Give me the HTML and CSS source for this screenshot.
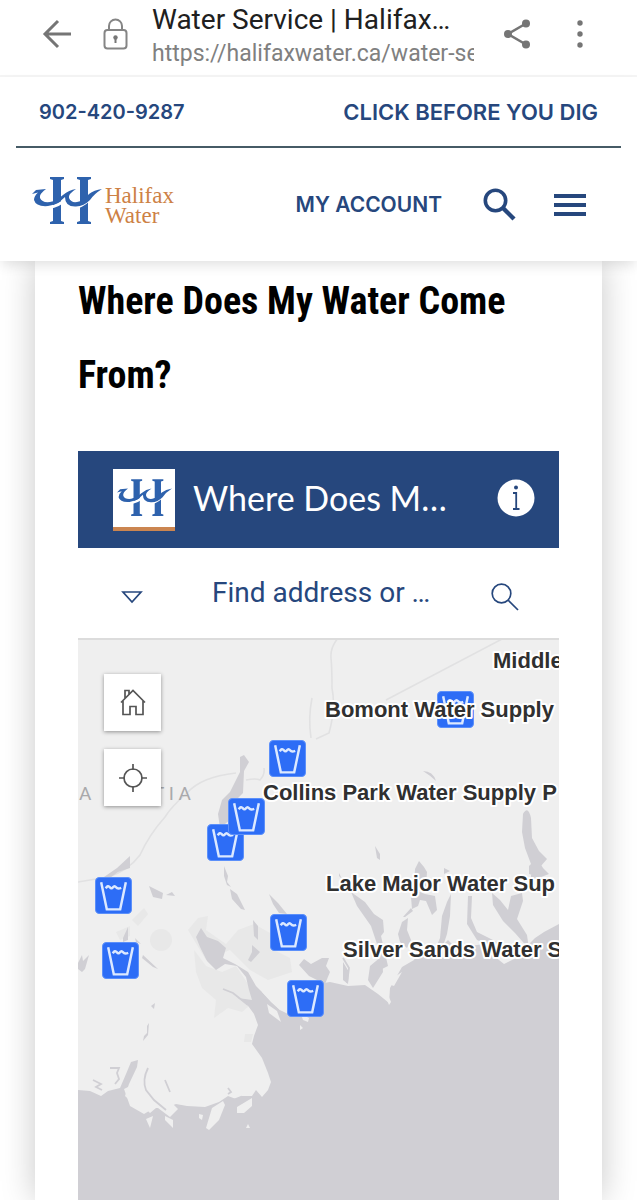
FILE: index.html
```
<!DOCTYPE html>
<html lang="en">
<head>
<meta charset="utf-8">
<meta name="viewport" content="width=device-width, initial-scale=1">
<title>Water Service | Halifax Water</title>
<link rel="stylesheet" href="styles.css">
</head>
<body>
<svg class="sprite" aria-hidden="true">
  <symbol id="mark" viewBox="0 0 70 48">
    <path fill="#2e62ad" d="M18 0h14v2l-3 1v41l3 1v2H18v-2l3-1V3l-3-1zM45 0h14v2l-3 1v41l3 1v2H45v-2l3-1V3l-3-1z"/>
    <path d="M17 30.500Q27 29 34 22M44 30.500Q54 28 61 18" fill="none" stroke="#fff" stroke-width="3"/>
    <path fill="#2e62ad" d="M0 17 4 13 14 12Q7 17 8 21 10 26 18 25 24 24 31 18 37 13 44 12 36 17 37 21 39 26 45 25 51 24 57 17 62 13 70 12 62 17 58 23 52 29 44 29.500 33 30 33 20 25 28 16 29 4 30 2 23 2 19 6 15.500z"/>
  </symbol>
  <symbol id="glass" viewBox="0 0 36 36">
    <rect x=".5" y=".5" width="35" height="35" rx="4" fill="#2d6df6" stroke="#5c90fa"/>
    <path d="M6 5 11.500 31.500h13L30 5" fill="none" stroke="#dce9ff" stroke-width="2.400"/>
    <path d="M10.500 11q2-3.500 4-1 1.500 2 3 0 1.500-2 3 0t5 .5" fill="none" stroke="#dce9ff" stroke-width="2.400"/>
  </symbol>
</svg>

<div class="browser">
  <button class="icon-button" aria-label="Back"><svg width="30" height="30" viewBox="0 0 30 30"><path d="M29 15H3M16 2 3 15l13 13" fill="none" stroke="#757575" stroke-width="3"/></svg></button>
  <svg class="lock" width="25" height="32" viewBox="0 0 25 32" role="img" aria-label="Secure"><g fill="none" stroke="#858585" stroke-width="2"><rect x="1.500" y="12" width="22" height="18.500" rx="3"/><path d="M6 12V8a6.500 6.500 0 0 1 13 0v4"/></g><circle cx="12.500" cy="19.500" r="2.200" fill="#777"/><path d="M12.500 20v5" stroke="#777" stroke-width="2"/></svg>
  <div class="address">
    <div class="page-name">Water Service | Halifax…</div>
    <div class="page-url">https://halifaxwater.ca/water-se</div>
  </div>
  <button class="icon-button share" aria-label="Share"><svg width="26" height="30" viewBox="0 0 26 30"><path d="M22 4.500 4 15l18 10.500" fill="none" stroke="#757575" stroke-width="2.600"/><g fill="#757575"><circle cx="22" cy="4.500" r="4"/><circle cx="4" cy="15" r="4"/><circle cx="22" cy="25.500" r="4"/></g></svg></button>
  <button class="icon-button" aria-label="More options"><svg width="8" height="28" viewBox="0 0 8 28" fill="#757575"><circle cx="4" cy="3" r="2.700"/><circle cx="4" cy="14" r="2.700"/><circle cx="4" cy="25" r="2.700"/></svg></button>
</div>

<header class="site-header">
  <div class="quick-links">
    <a href="tel:902-420-9287">902-420-9287</a>
    <a class="dig" href="#dig">CLICK BEFORE YOU DIG</a>
  </div>
  <div class="main-row">
    <a class="brand" href="#home">
      <svg width="70" height="48" aria-hidden="true"><use href="#mark"/></svg>
      <span class="brand-name"><span>Halifax</span><span>Water</span></span>
    </a>
    <a class="account" href="#account">MY ACCOUNT</a>
    <button class="icon-button search-toggle" aria-label="Search"><svg width="33" height="33" viewBox="0 0 33 33" fill="none" stroke="#26477d"><circle cx="12.500" cy="12.500" r="10.200" stroke-width="3.600"/><path d="m20 20 11 11" stroke-width="4.400"/></svg></button>
    <button class="icon-button" aria-label="Menu"><svg width="32" height="22" viewBox="0 0 32 22" fill="#26477d"><path d="M0 0h32v4H0zM0 9h32v4H0zM0 18h32v4H0z"/></svg></button>
  </div>
</header>

<main class="card">
  <h1>Where Does My Water Come <br>From?</h1>
  <section class="map-app">
    <div class="banner">
      <div class="app-logo"><svg width="55" height="38" aria-hidden="true"><use href="#mark"/></svg></div>
      <h2>Where Does M…</h2>
      <button class="icon-button" aria-label="About"><svg width="38" height="38" viewBox="0 0 38 38"><circle cx="19" cy="19" r="18.500" fill="#fff"/><circle cx="19" cy="8.500" r="2" fill="#26477d"/><path d="M16 14h3.200v15.500M16 30h6.500" fill="none" stroke="#26477d" stroke-width="1.800"/></svg></button>
    </div>
    <form class="finder">
      <button type="button" class="icon-button" aria-label="Choose source"><svg width="22" height="13" viewBox="0 0 22 13"><path d="M2 1h18l-9 10z" fill="none" stroke="#26477d" stroke-width="1.700"/></svg></button>
      <input type="text" aria-label="Find address or place" placeholder="Find address or …">
      <button type="button" class="icon-button" aria-label="Find"><svg width="28" height="28" viewBox="0 0 28 28" fill="none" stroke="#26477d" stroke-width="1.700"><circle cx="10.500" cy="10.500" r="9.300"/><path d="m17 17 10 10"/></svg></button>
    </form>
    <div class="map">
      <svg class="terrain" viewBox="78 640 481 560" preserveAspectRatio="xMinYMin slice" aria-hidden="true">
        <g fill="#e8e8e8">
          <path d="M188 930 198 918 208 916 206 930 226 944 238 930 254 924 272 934 274 950 290 958 292 972 268 980 250 970 230 950 206 960zM194 950 206 966 222 972 236 966 252 990 254 1002 242 1012 228 1008 214 1018 216 1000 202 988 196 972z"/>
          <circle cx="161" cy="940" r="11"/><path d="m132 920 12-12 4 6-10 12zM116 932l14-6v10l-10 4zM245 1034h8l-2 8h-7z"/>
        </g>
        <g fill="none" stroke="#e1e1e2" stroke-width="1.600">
          <path d="M386 700 504 638M338 638q-8 10-7 20t1 30q4 20-3 45l-13 6M236 773q-18 2-30 7t-19 13q-16 14-22 24-16 18-25 38-12 16-32 22l-30 5M246 780q10-2 14 0 5-5 4-12"/>
          <path d="M312 698q-4 20-1 40"/>
        </g>
        <g fill="#d0cfd4">
          <path d="m240 757 4-2 5 7-5 9-1 22-7 7-6 20-10 8-2-14 4-14 8-8 10-20zM104 877l13-9 13-12v12l-12 4-11 8zM149 886l14 7-1 6-9-2zM166 895l6-3 3 4zM224 866l4 10-1 6 4 5-4-2-3-9zM230 889l7 5 8 16-4-1-9-10zM269 894l9 9 9 11-8-1-6-9zM253 920l5 6v14l-4-4zM252 945l8 7-9 10-3-2 4-8zM123 938l5-11v13l-5 2zM143 955l15 14-5-2-11-9zM135 938l6 6-5-2zM78 963l4-8 1 6 6-6-4 14-3 3-4-3zM151 1006l4-3-1 6zM147 1026l2-3-1 12-5 6 1-5 3-3z"/>
          <path d="M423 771q10 0 13 10-5-5-13-10M375 846l5 8v6l-3-2zM523 814q5-9 8 4l1 20 7 13 8 8-6 7-2 14-8-2v-14l-6-16-3-16zM415 869l4-8 5 6 3 5-1 14-8 6-4-8zM444 868l6 3-6 3zM529 866l8-8 6 10 6 6-8 3-12-3zM339 873l3 6-3-3z"/>
          <path d="m351 892 14 10 9 12 9 6 1 12-3 4 7 30-8 4-3-26-6-18-14-20zM411 897l4-7 10 4 10 2 2 14-5 5-6-14-6-1-2 6-6 3zM447 902l4-8-1 22-3 18-10 30-6-4 9-22 2-22zM468 896h4l-1 22 6 14 12 6 10 5-6 4-16-7-10-16zM492 893l8 7 8 10 3-14 11-3 1 8-6 18 10 16 2 14-14-16-12-12-10-16zM403 917l8-9 2 3-8 6zM402 922l6-4-1 12 4 10-4 8-7-6-2-8z"/>
          <path d="M299 965 304 959 311 964 322 958 329 958 326 966 330 972 325 984 309 976zM343 962l6 10-1 12-5-4zM370 966l12-10 1 16-10 16-5-8z"/>
          <path d="M78 1090 90 1091 101 1096 108 1091 120 1088 126 1074 131 1062 138 1060 137 1067 129 1084 125 1096 134 1104 144 1107 150 1113 156 1108 166 1108 176 1104 187 1106 205 1107 219 1102 228 1096 236 1099 242 1096 252 1096 256 1090 262 1097 268 1090 271 1082 268 1073 262 1058 252 1044 254 1036 258 1025 254 1014 246 1003 238 998 252 1000 249 990 246 977 237 966 225 964 216 970 207 961 200 947 196 937 201 928 207 937 218 941 226 948 223 958 235 964 248 972 256 986 268 998 280 1010 290 1015 302 1014 309 1003 318 984 330 982 348 986 365 985 378 994 389 1003 390 988 402 967 414 960 420 948 436 952 448 940 458 950 470 946 484 944 494 956 504 964 516 958 529 944 535 938 544 932 559 924V1200H78z"/>
        </g>
        <g fill="#efefef">
          <path d="m262 992 10 2 7 6 9 12-8-2-9-8zM267 1004l10 7 4 11-12-9zM301 1014l8 4-1 4-5-2zM300 1025l3 3-3 2zM146 1119l7-3-3 12zM165 1116l8 4v8l-8-8zM199 1114l4 1-1 5-3-2zM212 1108l11-7 2 4-6 15-10 10-3-2zM237 1107l15-9v8l-8 7h-7zM248 1124l2 4h-4zM124 1089l10-5 12 12 8 12-10 6-14-8zM154 1102l14-3 10 10-8 8-12-9zM387 1000l2-3 2 5-2 3zM388 984l8-8 6-4-8 14zM290 985l8-2v6z"/>
        </g>
        <g fill="none" stroke="#d0cfd4" stroke-width="1.800">
          <path d="M148 1068q-6 12-2 22l8 10 12 10M165 1080l5 12M110 1068h9l-2 5 2 6-4 5M93 1080l8 4-5 3 6 3M228 1088l3 4-3 2M233 1100l8-3 2 6"/>
          <path d="m223 989 10 4 15 12M343 958l6 10-2 15"/>
        </g>
        <g fill="#a9a9ab" font-family="Roboto, sans-serif" font-size="19"><text x="79" y="800">A</text><text x="153" y="800">T I A</text></g>
        <use href="#glass" x="437" y="691" width="37" height="37"/>
        <use href="#glass" x="269" y="740" width="37" height="37"/>
        <use href="#glass" x="207" y="824" width="37" height="37"/>
        <use href="#glass" x="228" y="798" width="37" height="37"/>
        <use href="#glass" x="95" y="877" width="37" height="37"/>
        <use href="#glass" x="102" y="942" width="37" height="37"/>
        <use href="#glass" x="270" y="914" width="37" height="37"/>
        <use href="#glass" x="287" y="980" width="37" height="37"/>
        <g class="place-names">
          <text x="493" y="668">Middle</text>
          <text x="325" y="717">Bomont Water Supply</text>
          <text x="263" y="800">Collins Park Water Supply P</text>
          <text x="326" y="891">Lake Major Water Sup</text>
          <text x="343" y="957">Silver Sands Water S</text>
        </g>
      </svg>
      <div class="map-tools">
        <button aria-label="Home"><svg width="26" height="27" viewBox="0 0 26 27" fill="none" stroke="#555" stroke-width="1.700"><path d="M1 13.500 13 1.500l12 12M3 12v13.500h7v-8h6v8h7V12M5 9V1.500h4V5"/></svg></button>
        <button aria-label="My location"><svg width="28" height="28" viewBox="0 0 28 28" fill="none" stroke="#555" stroke-width="1.700"><circle cx="14" cy="14" r="9"/><path d="M14 0v6M14 22v6M0 14h6M22 14h6"/></svg></button>
      </div>
    </div>
  </section>
</main>
</body>
</html>
```
FILE: styles.css
```
* { box-sizing: border-box; }

body {
  margin: 0;
  min-height: 100vh;
  display: flex;
  flex-direction: column;
  background: #fff;
  font-family: Roboto, sans-serif;
  overflow-x: hidden;
}

a { color: inherit; text-decoration: none; }

button {
  padding: 0;
  border: 0;
  background: none;
  display: flex;
  align-items: center;
  justify-content: center;
}

.sprite { position: absolute; width: 0; height: 0; }
.icon-button { flex: none; }

.browser {
  display: flex;
  align-items: center;
  height: 77px;
  padding: 0 53px 8px 42px;
  border-bottom: 2px solid #f5f5f5;
}
.lock { flex: none; margin-left: 31px; }
.address {
  flex: 1;
  min-width: 0;
  margin-left: 24px;
  padding-top: 4px;
  overflow: hidden;
  white-space: nowrap;
}
.page-name { font-size: 28px; line-height: 36px; color: #202020; }
.page-url { font-size: 23px; line-height: 32px; color: #808080; }
.share { margin: 0 46px 0 30px; }

.site-header {
  position: relative;
  z-index: 1;
  padding: 0 16px;
  background: #fff;
  box-shadow: 0 6px 12px -2px rgba(0, 0, 0, 0.12);
  color: #26477d;
  font: 600 20px Inter, sans-serif;
}
.quick-links {
  display: flex;
  justify-content: space-between;
  align-items: center;
  height: 71px;
  padding: 0 23px;
  border-bottom: 2px solid #465b66;
}
.dig { font-size: 22px; }
.main-row {
  display: flex;
  align-items: center;
  height: 113px;
  padding: 0 35px 0 16px;
}
.brand { display: flex; align-items: flex-start; gap: 3px; padding-bottom: 6px; }
.brand-name {
  display: grid;
  padding-top: 9px;
  font: 23px/20px "Liberation Serif", serif;
  color: #cd8145;
}
.account { margin-left: auto; font-size: 21px; }
.search-toggle { margin: 0 38px 0 41px; }

.card {
  flex: 1;
  display: flex;
  flex-direction: column;
  margin: 0 35px;
  padding: 3px 43px 0;
  background: #fff;
  box-shadow: 0 0 32px rgba(0, 0, 0, 0.22);
}
h1 {
  margin: 0 0 39px;
  font: 700 38px/74px "Roboto Condensed", Roboto, sans-serif;
  color: #000;
}

.map-app { flex: 1; display: flex; flex-direction: column; }
.banner {
  display: flex;
  align-items: center;
  height: 97px;
  padding: 0 24px 0 35px;
  background: #26477d;
  color: #fff;
}
.banner .icon-button { padding-bottom: 3px; }
.app-logo {
  display: flex;
  align-items: center;
  justify-content: center;
  width: 62px;
  height: 62px;
  background: #fff;
  border-bottom: 4px solid #cb8550;
}
.banner h2 {
  flex: 1;
  margin: 0 0 0 18px;
  padding-bottom: 4px;
  font: 400 34px/40px Lato, sans-serif;
}

.finder {
  display: flex;
  align-items: center;
  height: 90px;
  padding: 0 40px 0 43px;
}
.finder .icon-button { padding-top: 8px; }
.finder input {
  flex: 1;
  min-width: 0;
  margin: 0 24px 0 69px;
  padding: 0;
  border: 0;
  outline: 0;
  background: none;
  font: 28px/36px Roboto, sans-serif;
  color: #26477d;
}
.finder input::placeholder { color: #26477d; opacity: 1; }

.map {
  position: relative;
  flex: 1;
  min-height: 560px;
  overflow: hidden;
  border-top: 2px solid #dcdcdc;
  background: #efefef;
}
.terrain { position: absolute; top: 0; left: 0; width: 100%; height: 100%; }
.place-names {
  font: 700 22px "Liberation Sans", sans-serif;
  fill: #303030;
  stroke: #fff;
  stroke-width: 4px;
  stroke-linejoin: round;
  paint-order: stroke;
}
.map-tools {
  position: absolute;
  top: 34px;
  left: 26px;
  display: grid;
  gap: 18px;
}
.map-tools button {
  width: 57px;
  height: 57px;
  background: #fff;
  box-shadow: 0 1px 4px rgba(0, 0, 0, 0.4);
}
```
